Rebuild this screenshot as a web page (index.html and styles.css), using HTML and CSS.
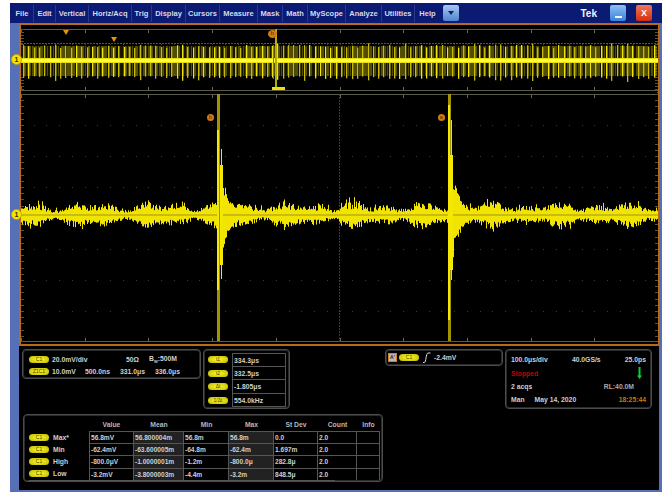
FILE: index.html
```html
<!DOCTYPE html>
<html lang="en">
<head>
<meta charset="utf-8">
<title>Tek oscilloscope</title>
<link rel="stylesheet" href="styles.css">
</head>
<body>
<div class="app">
  <header class="menubar">
    <nav class="menu">
      <span class="mi w-file">File</span><span class="mi w-edit">Edit</span><span class="mi w-vert">Vertical</span><span class="mi w-horiz">Horiz/Acq</span><span class="mi w-trig">Trig</span><span class="mi w-disp">Display</span><span class="mi w-curs">Cursors</span><span class="mi w-meas">Measure</span><span class="mi w-mask">Mask</span><span class="mi w-math">Math</span><span class="mi w-mysc">MyScope</span><span class="mi w-anal">Analyze</span><span class="mi w-util">Utilities</span><span class="mi w-help">Help</span>
      <span class="dropbtn"><svg width="6" height="4" viewBox="0 0 6 4"><path d="M0 0h6L3 4z" fill="#10206a"/></svg></span>
    </nav>
    <div class="winctl">
      <span class="tek">Tek</span>
      <span class="wbtn wmin"><i></i></span>
      <span class="wbtn wclose">X</span>
    </div>
  </header>
  <div class="body">
    <main class="content">
      <section class="scope">
        <div class="pane pane-over">
          <canvas id="over" width="637" height="67"></canvas>
          <span class="chmark over-mark">1</span>
          <span class="curs-dot dot-t">b</span>
          <span class="tri tri-a"></span>
          <span class="tri tri-b"></span>
          <span class="tbar"></span>
        </div>
        <div class="pane pane-main">
          <canvas id="main" width="637" height="251"></canvas>
          <span class="chmark main-mark">1</span>
          <span class="curs-dot dot-a">b</span>
          <span class="curs-dot dot-b">a</span>
        </div>
      </section>
      <section class="readouts">
        <div class="toprow">
          <div class="panel channels">
            <div class="chrow"><span class="pill">C1</span><span class="c-a">20.0mV/div</span><span class="c-b">50Ω</span><span class="c-c">B<sub>W</sub>:500M</span></div>
            <div class="chrow"><span class="pill">Z1C1</span><span class="c-d">10.0mV</span><span class="c-e">500.0ns</span><span class="c-f">331.0μs</span><span class="c-f">336.0μs</span></div>
          </div>
          <div class="panel cursors">
            <div class="crow"><span class="cpill"><span class="pill">t1</span></span><span class="cval">334.3μs</span></div>
            <div class="crow"><span class="cpill"><span class="pill">t2</span></span><span class="cval">332.5μs</span></div>
            <div class="crow"><span class="cpill"><span class="pill">Δt</span></span><span class="cval">-1.805μs</span></div>
            <div class="crow"><span class="cpill"><span class="pill">1/Δt</span></span><span class="cval">554.0kHz</span></div>
          </div>
          <div class="panel trigger">
            <span class="trigbox">A'</span><span class="pill">C1</span>
            <svg class="edge" width="9" height="11" viewBox="0 0 9 11"><path d="M1 10.5h1.5C4 10.5 4 1 6 1h2.5" fill="none" stroke="#ddd" stroke-width="1"/></svg>
            <span>-2.4mV</span>
          </div>
          <div class="panel acq">
            <div class="arow"><span>100.0μs/div</span><span class="a-mid">40.0GS/s</span><span>25.0ps</span></div>
            <div class="arow"><span class="stopped">Stopped</span><span class="arrow"><svg width="5" height="12" viewBox="0 0 5 12"><path d="M1.5 0h2v8.5H5L2.5 12 0 8.5h1.5z" fill="#12d02a"/></svg></span></div>
            <div class="arow"><span>2 acqs</span><span class="rl">RL:40.0M</span></div>
            <div class="arow"><span>Man</span><span class="a-date">May 14, 2020</span><span class="clock">18:25:44</span></div>
          </div>
        </div>
        <div class="panel meas">
          <div class="mrow mhead"><span class="mlabel"></span><span class="mc c1">Value</span><span class="mc c2">Mean</span><span class="mc c3">Min</span><span class="mc c3">Max</span><span class="mc c4">St Dev</span><span class="mc c5">Count</span><span class="mc c6">Info</span></div>
          <div class="mgrid">
            <div class="mrow"><span class="mlabel"><span class="pill">C1</span>Max*</span><span class="md c1">56.8mV</span><span class="md c2 alt">56.800004m</span><span class="md c3">56.8m</span><span class="md c3 alt">56.8m</span><span class="md c4">0.0</span><span class="md c5">2.0</span><span class="md c6"></span></div>
            <div class="mrow"><span class="mlabel"><span class="pill">C1</span>Min</span><span class="md c1">-62.4mV</span><span class="md c2 alt">-63.600005m</span><span class="md c3">-64.8m</span><span class="md c3 alt">-62.4m</span><span class="md c4">1.697m</span><span class="md c5">2.0</span><span class="md c6"></span></div>
            <div class="mrow"><span class="mlabel"><span class="pill">C1</span>High</span><span class="md c1">-800.0μV</span><span class="md c2 alt">-1.0000001m</span><span class="md c3">-1.2m</span><span class="md c3 alt">-800.0μ</span><span class="md c4">282.8μ</span><span class="md c5">2.0</span><span class="md c6"></span></div>
            <div class="mrow"><span class="mlabel"><span class="pill">C1</span>Low</span><span class="md c1">-3.2mV</span><span class="md c2 alt">-3.8000003m</span><span class="md c3">-4.4m</span><span class="md c3 alt">-3.2m</span><span class="md c4">848.5μ</span><span class="md c5">2.0</span><span class="md c6"></span></div>
          </div>
        </div>
      </section>
    </main>
  </div>
</div>
<script src="scope.js"></script>
</body>
</html>
```

FILE: styles.css
```css
* { box-sizing: border-box; }
html, body { margin: 0; background: #fff; }
body { width: 670px; height: 496px; overflow: hidden; padding: 3px 8px 4px 10px; font-family: "Liberation Sans", Arial, sans-serif; }
.app { width: 652px; height: 489px; display: flex; flex-direction: column; background: #5670b8; filter: blur(0.45px); }
.menubar { height: 20px; flex: none; display: flex; justify-content: space-between; background: #0b1a72; color: #d5d9ea; font-size: 7.5px; font-weight: bold; }
.menu { display: flex; align-items: center; padding-left: 1px; }
.mi { display: block; text-align: center; height: 17px; line-height: 17px; border-right: 1px solid #2a3a8c; white-space: nowrap; }
.w-file { width: 23px; } .w-edit { width: 22px; } .w-vert { width: 33px; } .w-horiz { width: 43px; } .w-trig { width: 20px; } .w-disp { width: 34px; } .w-curs { width: 34px; } .w-meas { width: 38px; } .w-mask { width: 25px; } .w-math { width: 25px; } .w-mysc { width: 38px; } .w-anal { width: 36px; } .w-util { width: 33px; } .w-help { width: 25px; border-right: 0; }
.dropbtn { width: 16px; height: 16px; margin-left: 3px; border-radius: 2px; background: linear-gradient(#a9c7f0, #4f84d0); display: flex; align-items: center; justify-content: center; }
.winctl { display: flex; align-items: center; padding-right: 10px; }
.tek { font-size: 10px; font-weight: bold; color: #f2f2f2; margin-right: 13px; }
.wbtn { width: 16px; height: 16px; border-radius: 2px; display: flex; align-items: center; justify-content: center; }
.wmin { background: linear-gradient(#8cc0f2, #3a82d8); margin-right: 10px; }
.wmin i { display: block; width: 7px; height: 2px; margin-top: 7px; background: #eef4ff; }
.wclose { background: linear-gradient(#ee7a5a, #d42c10); color: #fff; font-size: 9px; font-weight: bold; }
.body { flex: 1; display: flex; padding: 0 3px 2px 9px; min-height: 0; }
.content { width: 640px; background: #000; display: flex; flex-direction: column; }
.scope { height: 323px; flex: none; border: 2px solid #b86a16; border-width: 2px 2px 2px 2px; background: #000; display: flex; flex-direction: column; }
.pane { position: relative; line-height: 0; }
.pane canvas { display: block; }
.pane-over { height: 68px; }
.pane-main { flex: 1; }
.chmark { position: absolute; left: -10px; width: 11px; height: 11px; border-radius: 50%; background: #f4e400; border: 1px solid #c9a000; color: #3a3000; font-size: 7px; line-height: 9px; text-align: center; font-weight: bold; }
.over-mark { top: 29px; }
.main-mark { top: 116px; }
.curs-dot { position: absolute; width: 7px; height: 7px; border-radius: 50%; background: #d17c12; color: #442200; font-size: 5px; line-height: 7px; text-align: center; }
.dot-t { left: 247px; top: 5px; width: 9px; height: 8px; }
.dot-a { left: 186px; top: 21px; }
.dot-b { left: 417px; top: 21px; }
.tri { position: absolute; width: 0; height: 0; border-left: 3px solid transparent; border-right: 3px solid transparent; border-top: 5px solid #e8920e; }
.tri-a { left: 42px; top: 5px; }
.tri-b { left: 90px; top: 12px; }
.tbar { position: absolute; left: 251px; top: 62px; width: 13px; height: 3px; background: #f0e000; }
.readouts { flex: 1; padding: 3px 0 0 3px; color: #cfcfcf; font-size: 6.8px; font-weight: bold; }
.toprow { display: flex; align-items: flex-start; height: 62px; }
.panel { border: 1px solid #4c4c4c; border-radius: 4px; box-shadow: inset 0 0 0 1px #2a2a2a; }
.pill { display: inline-block; width: 20px; height: 7px; border-radius: 4px; background: radial-gradient(ellipse at center, #f2ec20 20%, #bcb800 100%); color: #3f3f00; font-size: 5px; line-height: 7px; text-align: center; font-weight: normal; flex: none; }
.channels { width: 179px; height: 30px; padding: 3px 0 0 6px; }
.chrow { display: flex; align-items: center; height: 12px; white-space: nowrap; }
.chrow .pill { margin-right: 3px; }
.c-a { width: 74px; } .c-b { width: 23px; } .c-c sub { font-size: 4px; line-height: 0; }
.c-d { width: 33px; } .c-e { width: 35px; } .c-f { width: 35px; }
.cursors { width: 87px; height: 60px; margin-left: 2px; padding: 3px 3px 0 0; }
.crow { display: flex; height: 13.5px; align-items: center; }
.cpill { width: 28px; display: flex; justify-content: center; flex: none; }
.cpill .pill { width: 20px; }
.cval { flex: 1; height: 100%; line-height: 13px; padding-left: 1px; border: 1px solid #555; border-top-width: 0; }
.crow:first-child .cval { border-top-width: 1px; }
.trigger { width: 118px; height: 17px; margin-left: 95px; display: flex; align-items: center; padding-left: 2px; gap: 2px; }
.trigbox { width: 9px; height: 9px; background: #b8b8b8; border: 1px solid #d08020; color: #222; font-size: 5px; line-height: 7px; text-align: center; }
.edge { margin: 0 1px; }
.acq { width: 147px; height: 60px; margin-left: 2px; padding: 3px 5px 0 5px; }
.arow { display: flex; justify-content: space-between; height: 13.4px; align-items: center; white-space: nowrap; }
.a-mid { margin-right: 0; }
.a-date { margin: 0 auto 0 10px; }
.stopped { color: #c00000; }
.arrow { display: flex; margin-right: 4px; }
.rl { margin-right: 12px; color: #aaa; }
.clock { color: #c97a08; }
.meas { width: 360px; height: 68px; margin-left: 1px; margin-top: 3px; padding: 3px 2px 0 5px; }
.mrow { display: flex; height: 12.2px; align-items: center; white-space: nowrap; }
.mhead { height: 13px; text-align: center; color: #b8b8b8; }
.mlabel { width: 60px; display: flex; align-items: center; gap: 4px; flex: none; }
.mlabel .pill { width: 20px; }
.mc, .md { display: block; flex: none; overflow: hidden; }
.c1 { width: 45px; } .c2 { width: 50px; } .c3 { width: 45px; } .c4 { width: 44px; } .c5 { width: 39px; } .c6 { width: 23px; }
.md { height: 100%; line-height: 11px; padding-left: 1px; border: 1px solid #555; border-width: 1px 1px 0 0; font-size: 6.6px; letter-spacing: 0; }
.md.c1 { border-left: 1px solid #555; }
.md.alt { background: #222; }
.mgrid { border-bottom: 1px solid #555; width: 306px; }
```

FILE: scope.js
```javascript
(function () {
  var seed = 12345;
  function rnd() { seed = (seed * 1664525 + 1013904223) >>> 0; return seed / 4294967296; }

  function ticks(ctx, w, y0, y1, cy, divW, divH) {
    ctx.fillStyle = "#5a5a4a";
    ctx.fillRect(0, y0, w, 1);
    ctx.fillRect(0, y1, w, 1);
    var x, y;
    for (x = 0; x <= w; x += divW) {
      ctx.fillStyle = "#6a6a58";
      ctx.fillRect(Math.round(x), y0 + 1, 1, 3);
      ctx.fillRect(Math.round(x), y1 - 3, 1, 3);
    }
    ctx.fillStyle = "#3c3c32";
    for (x = 0; x <= w; x += divW / 5) {
      for (y = y0 + divH; y < y1 - 2; y += divH) ctx.fillRect(Math.round(x), Math.round(y), 1, 1);
    }
    for (y = y0; y <= y1; y += divH / 5) {
      ctx.fillStyle = "#55553f";
      ctx.fillRect(0, Math.round(y), 3, 1);
      ctx.fillRect(w - 3, Math.round(y), 3, 1);
    }
  }

  function drawOverview() {
    var c = document.getElementById("over"), ctx = c.getContext("2d"), w = c.width;
    ctx.fillStyle = "#000"; ctx.fillRect(0, 0, w, c.height);
    ticks(ctx, w, 4, 65, 35, 63.7, 15);
    ctx.fillStyle = "#6a5020";
    for (var d = 0; d < w; d += 3) ctx.fillRect(d, 18, 2, 1);
    // dense spike body
    var x, top, bot;
    ctx.fillStyle = "rgba(150,140,0,0.55)";
    ctx.fillRect(0, 21, w, 30);
    for (x = 0; x < w; x += 1) {
      if (rnd() < 0.45) { ctx.fillStyle = "#000"; ctx.globalAlpha = 0.75; ctx.fillRect(x, 20, 1, 32); ctx.globalAlpha = 1; }
    }
    for (x = 2; x < w; x += 5.3) {
      top = 20 + rnd() * 3; bot = 51 + rnd() * 3;
      if (rnd() < 0.12) { top -= 2; bot += 3; }
      ctx.fillStyle = rnd() < 0.3 ? "#f2e600" : "#c8bc00";
      ctx.fillRect(Math.round(x), top, 1.3, bot - top);
    }
    ctx.fillStyle = "#e8dc10"; ctx.fillRect(0, 33, w, 5);
    ctx.fillStyle = "#ffff30"; ctx.fillRect(0, 34, w, 3);
    ctx.fillStyle = "#b8ac00"; ctx.fillRect(254, 4, 2, 58);
    ctx.fillStyle = "#8a8000"; ctx.fillRect(252, 20, 1, 34);
  }

  function envelope(x, sx) {
    var d = x - sx;
    if (d < -1) return 0;
    return Math.exp(-d / 5.5);
  }

  function drawMain() {
    var c = document.getElementById("main"), ctx = c.getContext("2d"), w = c.width, h = c.height;
    ctx.fillStyle = "#000"; ctx.fillRect(0, 0, w, h);
    ticks(ctx, w, 1, h - 3, 122, 63.7, 31);
    var cy = 122, s1 = 197, s2 = 428, x;
    ctx.fillStyle = "#3c3c32";
    for (var yy = 1; yy < h - 3; yy += 3) ctx.fillRect(318, yy, 1, 2);
    ctx.fillStyle = "#ccc000";
    for (x = 0; x < w; x += 1) {
      var swell = 1 + 0.5 * Math.sin(x / 23) * Math.sin(x / 7.3);
      var up = (4 + rnd() * 6) * swell, dn = (4 + rnd() * 6) * swell;
      if (rnd() < 0.06) up += 4;
      if (rnd() < 0.06) dn += 4;
      [s1, s2].forEach(function (s) {
        var e = envelope(x, s);
        if (e > 0) {
          up += e * (40 + rnd() * 30);
          dn += e * (40 + rnd() * 30);
        }
      });
      ctx.fillStyle = "#f0e400";
      ctx.fillRect(x, cy - up, 1, up + dn);
    }
    ctx.fillStyle = "#c8bc10"; ctx.fillRect(0, cy - 1, w, 2);
    // cursor lines
    ctx.fillStyle = "#a09400";
    ctx.fillRect(s1 - 1, 1, 3, h - 4);
    ctx.fillRect(s2 - 1, 1, 3, h - 4);
    // main pulses
    ctx.fillStyle = "#f4e800";
    ctx.fillRect(s1 - 1, cy - 85, 2, 160);
    ctx.fillRect(s1 + 3, cy - 66, 1, 130);
    ctx.fillRect(s1 + 2, cy - 50, 3, 100);
    ctx.fillRect(s2 - 1, cy - 110, 2, 215);
    ctx.fillRect(s2 + 2, cy - 95, 1, 160);
    ctx.fillRect(s2 + 1, cy - 60, 3, 115);
  }

  drawOverview();
  drawMain();
})();
```
